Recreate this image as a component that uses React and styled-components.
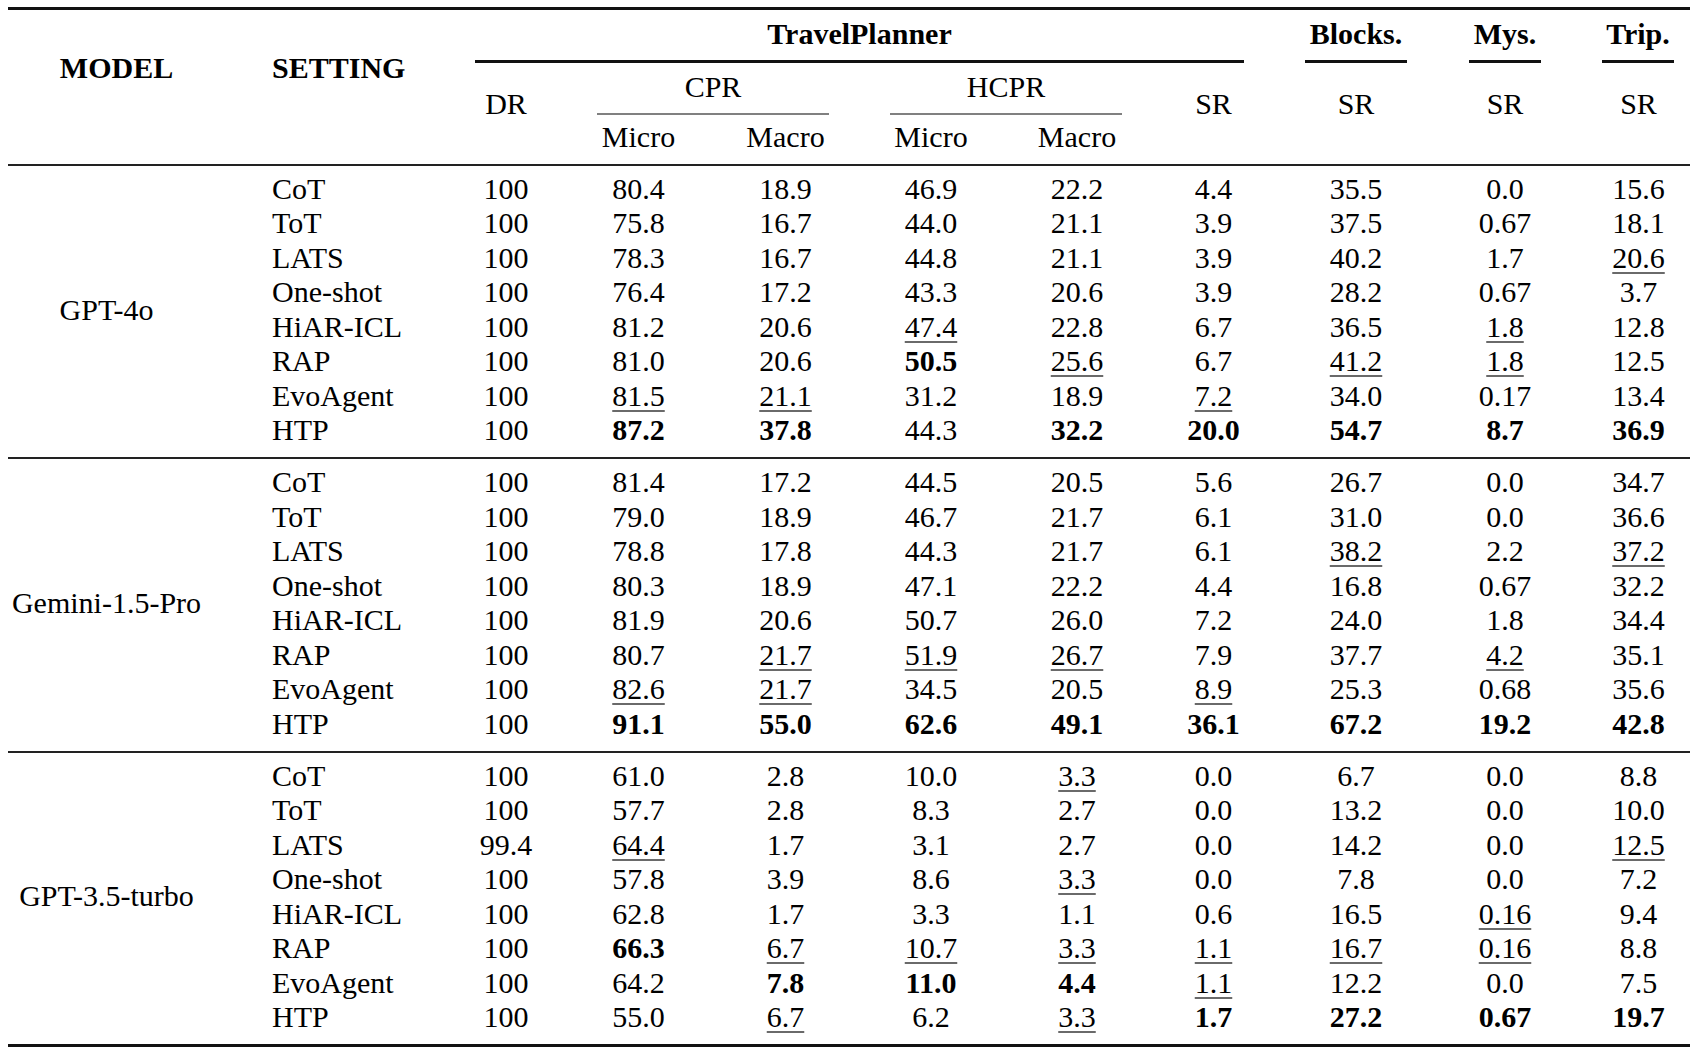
import React from 'react';
import styled, { createGlobalStyle } from 'styled-components';

const COLS = '197px 255px 92px 173px 121px 170px 122px 151px 134px 164px 103px';
const LH = 34.5;

const Global = createGlobalStyle`
  html, body { margin: 0; padding: 0; background: #fff; }
  body {
    font-family: "Liberation Serif", "Times New Roman", Times, serif;
    font-size: 30px;
    color: #000;
  }
`;

const Page = styled.div`
  box-sizing: content-box;
  width: 1682px;
  padding: 7px 0 0 8px;
`;

const Rule = styled.div`
  height: ${(p) => p.$h}px;
  background: ${(p) => p.$c || '#111'};
`;

const Header = styled.div`
  display: grid;
  grid-template-columns: ${COLS};
  grid-template-rows: auto auto auto;
`;

const HeadCell = styled.div`
  grid-column: ${(p) => p.$col};
  grid-row: ${(p) => p.$row};
  align-self: start;
  padding-top: ${(p) => p.$pt || 0}px;
  padding-bottom: ${(p) => p.$pb || 0}px;
  padding-left: ${(p) => p.$pl || 0}px;
  text-align: ${(p) => p.$align || 'center'};
  font-weight: ${(p) => (p.$bold ? 700 : 400)};
  line-height: ${LH}px;
  white-space: nowrap;
`;

const Spanner = styled.div`
  grid-column: ${(p) => p.$col};
  grid-row: ${(p) => p.$row};
  display: flex;
  flex-direction: column;
  margin: 0 ${(p) => p.$mr}px 0 ${(p) => p.$ml}px;
  padding-top: ${(p) => p.$pt}px;
`;

const SpanTitle = styled.div`
  text-align: center;
  line-height: ${LH}px;
  white-space: nowrap;
  font-weight: ${(p) => (p.$bold ? 700 : 400)};
`;

const SpanRule = styled.div`
  margin-top: ${(p) => p.$gap}px;
  height: ${(p) => p.$h}px;
  background: ${(p) => p.$c};
`;

const Group = styled.div`
  display: grid;
  grid-template-columns: ${COLS};
  grid-auto-rows: ${LH}px;
  padding: 6px 0 9.3px;
`;

const ModelCell = styled.div`
  grid-column: 1;
  grid-row: 1 / span 8;
  align-self: center;
  text-align: center;
  line-height: ${LH}px;
  white-space: nowrap;
`;

const SettingCell = styled.div`
  grid-column: 2;
  padding-left: 67px;
  line-height: ${LH}px;
  white-space: nowrap;
`;

const NumCell = styled.div`
  text-align: center;
  line-height: ${LH}px;
  white-space: nowrap;
`;

const Val = styled.span`
  font-weight: ${(p) => (p.$b ? 700 : 400)};
  text-decoration: ${(p) => (p.$u ? 'underline' : 'none')};
  text-decoration-thickness: 1.5px;
  text-underline-offset: 3.5px;
  text-decoration-color: #6a6a6a;
`;

const SETTINGS = ['CoT', 'ToT', 'LATS', 'One-shot', 'HiAR-ICL', 'RAP', 'EvoAgent', 'HTP'];

const GROUPS = [
  {
    model: 'GPT-4o',
    rows: [
      '100 80.4 18.9 46.9 22.2 4.4 35.5 0.0 15.6',
      '100 75.8 16.7 44.0 21.1 3.9 37.5 0.67 18.1',
      '100 78.3 16.7 44.8 21.1 3.9 40.2 1.7 _20.6',
      '100 76.4 17.2 43.3 20.6 3.9 28.2 0.67 3.7',
      '100 81.2 20.6 _47.4 22.8 6.7 36.5 _1.8 12.8',
      '100 81.0 20.6 *50.5 _25.6 6.7 _41.2 _1.8 12.5',
      '100 _81.5 _21.1 31.2 18.9 _7.2 34.0 0.17 13.4',
      '100 *87.2 *37.8 44.3 *32.2 *20.0 *54.7 *8.7 *36.9',
    ],
  },
  {
    model: 'Gemini-1.5-Pro',
    rows: [
      '100 81.4 17.2 44.5 20.5 5.6 26.7 0.0 34.7',
      '100 79.0 18.9 46.7 21.7 6.1 31.0 0.0 36.6',
      '100 78.8 17.8 44.3 21.7 6.1 _38.2 2.2 _37.2',
      '100 80.3 18.9 47.1 22.2 4.4 16.8 0.67 32.2',
      '100 81.9 20.6 50.7 26.0 7.2 24.0 1.8 34.4',
      '100 80.7 _21.7 _51.9 _26.7 7.9 37.7 _4.2 35.1',
      '100 _82.6 _21.7 34.5 20.5 _8.9 25.3 0.68 35.6',
      '100 *91.1 *55.0 *62.6 *49.1 *36.1 *67.2 *19.2 *42.8',
    ],
  },
  {
    model: 'GPT-3.5-turbo',
    rows: [
      '100 61.0 2.8 10.0 _3.3 0.0 6.7 0.0 8.8',
      '100 57.7 2.8 8.3 2.7 0.0 13.2 0.0 10.0',
      '99.4 _64.4 1.7 3.1 2.7 0.0 14.2 0.0 _12.5',
      '100 57.8 3.9 8.6 _3.3 0.0 7.8 0.0 7.2',
      '100 62.8 1.7 3.3 1.1 0.6 16.5 _0.16 9.4',
      '100 *66.3 _6.7 _10.7 _3.3 _1.1 _16.7 _0.16 8.8',
      '100 64.2 *7.8 *11.0 *4.4 _1.1 12.2 0.0 7.5',
      '100 55.0 _6.7 6.2 _3.3 *1.7 *27.2 *0.67 *19.7',
    ],
  },
];

function Value({ raw }) {
  const b = raw.startsWith('*');
  const u = raw.startsWith('_');
  const text = b || u ? raw.slice(1) : raw;
  return (
    <Val $b={b} $u={u}>
      {text}
    </Val>
  );
}

function TableHeader() {
  return (
    <Header>
      <HeadCell $col="1" $row="1 / 4" $pt={40.6} $pl={20} $bold>
        MODEL
      </HeadCell>
      <HeadCell $col="2" $row="1 / 4" $pt={40.6} $pl={67} $align="left" $bold>
        SETTING
      </HeadCell>

      <Spanner $col="3 / 9" $row="1" $ml={15} $mr={45} $pt={6.6}>
        <SpanTitle $bold>TravelPlanner</SpanTitle>
        <SpanRule $gap={9} $h={3} $c="#111" />
      </Spanner>
      <Spanner $col="9" $row="1" $ml={16} $mr={16} $pt={6.6}>
        <SpanTitle $bold>Blocks.</SpanTitle>
        <SpanRule $gap={9} $h={3} $c="#111" />
      </Spanner>
      <Spanner $col="10" $row="1" $ml={46} $mr={46} $pt={6.6}>
        <SpanTitle $bold>Mys.</SpanTitle>
        <SpanRule $gap={9} $h={3} $c="#111" />
      </Spanner>
      <Spanner $col="11" $row="1" $ml={15} $mr={16} $pt={6.6}>
        <SpanTitle $bold>Trip.</SpanTitle>
        <SpanRule $gap={9} $h={3} $c="#111" />
      </Spanner>

      <HeadCell $col="3" $row="2 / 4" $pt={23.5}>DR</HeadCell>
      <Spanner $col="4 / 6" $row="2" $ml={45} $mr={17} $pt={6.5}>
        <SpanTitle>CPR</SpanTitle>
        <SpanRule $gap={9.4} $h={1.5} $c="#808080" />
      </Spanner>
      <Spanner $col="6 / 8" $row="2" $ml={44} $mr={16} $pt={6.5}>
        <SpanTitle>HCPR</SpanTitle>
        <SpanRule $gap={9.4} $h={1.5} $c="#808080" />
      </Spanner>
      <HeadCell $col="8" $row="2 / 4" $pt={23.5}>SR</HeadCell>
      <HeadCell $col="9" $row="2 / 4" $pt={23.5}>SR</HeadCell>
      <HeadCell $col="10" $row="2 / 4" $pt={23.5}>SR</HeadCell>
      <HeadCell $col="11" $row="2 / 4" $pt={23.5}>SR</HeadCell>

      <HeadCell $col="4" $row="3" $pt={5.5} $pb={9}>Micro</HeadCell>
      <HeadCell $col="5" $row="3" $pt={5.5} $pb={9}>Macro</HeadCell>
      <HeadCell $col="6" $row="3" $pt={5.5} $pb={9}>Micro</HeadCell>
      <HeadCell $col="7" $row="3" $pt={5.5} $pb={9}>Macro</HeadCell>
    </Header>
  );
}

function ModelGroup({ group }) {
  return (
    <Group>
      <ModelCell>{group.model}</ModelCell>
      {group.rows.map((row, i) => (
        <React.Fragment key={i}>
          <SettingCell>{SETTINGS[i]}</SettingCell>
          {row.split(' ').map((raw, j) => (
            <NumCell key={j}>
              <Value raw={raw} />
            </NumCell>
          ))}
        </React.Fragment>
      ))}
    </Group>
  );
}

export default function App() {
  return (
    <Page>
      <Global />
      <Rule $h={3} $c="#111" />
      <TableHeader />
      <Rule $h={2} $c="#222" />
      {GROUPS.map((g, i) => (
        <React.Fragment key={g.model}>
          <ModelGroup group={g} />
          <Rule $h={i === GROUPS.length - 1 ? 3 : 2} $c={i === GROUPS.length - 1 ? '#111' : '#222'} />
        </React.Fragment>
      ))}
    </Page>
  );
}
